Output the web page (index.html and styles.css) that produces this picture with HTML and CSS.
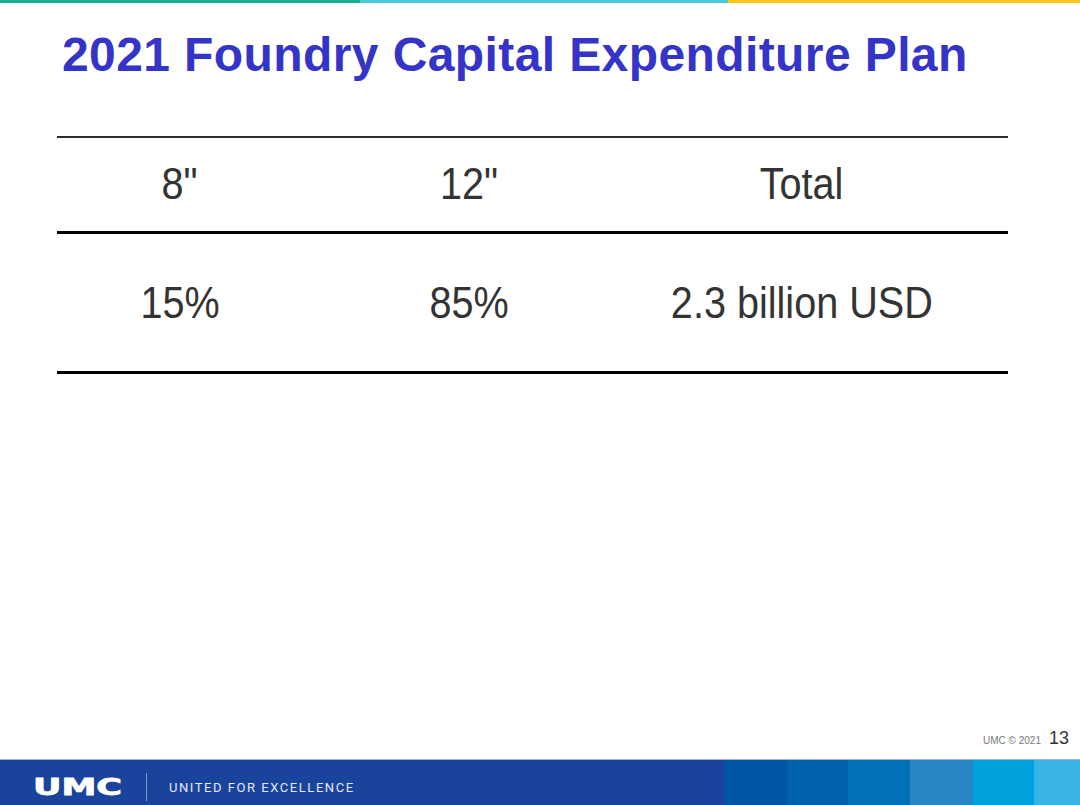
FILE: index.html
```html
<!DOCTYPE html>
<html lang="en">
<head>
<meta charset="utf-8">
<title>2021 Foundry Capital Expenditure Plan</title>
<link rel="stylesheet" href="styles.css">
</head>
<body>
<div class="slide">
  <div class="stripe">
    <span class="seg seg-green"></span>
    <span class="seg seg-cyan"></span>
    <span class="seg seg-yellow"></span>
  </div>

  <h1 class="title">2021 Foundry Capital Expenditure Plan</h1>

  <div class="capex">
    <div class="row row-head">
      <div class="cell"><span class="txt">8"</span></div>
      <div class="cell"><span class="txt">12"</span></div>
      <div class="cell"><span class="txt">Total</span></div>
      <div class="cell"></div>
    </div>
    <div class="row row-body">
      <div class="cell"><span class="txt">15%</span></div>
      <div class="cell"><span class="txt">85%</span></div>
      <div class="cell"><span class="txt">2.3 billion USD</span></div>
      <div class="cell"></div>
    </div>
  </div>

  <div class="spacer"></div>

  <div class="meta">
    <span class="copy">UMC © 2021</span>
    <span class="pageno">13</span>
  </div>

  <div class="footer">
    <div class="brand">
      <svg class="logo" width="92" height="22" viewBox="0 0 92 22" aria-label="UMC">
        <text x="1" y="19" textLength="89" lengthAdjust="spacingAndGlyphs" class="logo-text">UMC</text>
      </svg>
      <span class="divider"></span>
      <span class="tagline">UNITED FOR EXCELLENCE</span>
    </div>
    <span class="blk b1"></span>
    <span class="blk b2"></span>
    <span class="blk b3"></span>
    <span class="blk b4"></span>
    <span class="blk b5"></span>
    <span class="blk b6"></span>
  </div>
</div>
</body>
</html>
```

FILE: styles.css
```css
* { box-sizing: border-box; }

html, body {
  margin: 0;
  padding: 0;
  background: #ffffff;
}

.slide {
  width: 1080px;
  height: 805px;
  display: flex;
  flex-direction: column;
  font-family: "Liberation Sans", Arial, sans-serif;
  overflow: hidden;
}

/* top colour stripe */
.stripe {
  display: flex;
  height: 3px;
}
.seg { display: block; height: 3px; }
.seg-green { width: 360px; background: #17b08e; }
.seg-cyan { width: 368px; background: #4cc9db; }
.seg-yellow { flex: 1; background: #fcc719; }

/* title */
.title {
  margin: 28px 0 0 62px;
  font-size: 48px;
  line-height: 48px;
  font-weight: 700;
  letter-spacing: 0.4px;
  color: #3434c8;
}

/* table */
.capex {
  margin: 57px 0 0 57px;
  width: 951px;
  border-top: 2px solid #2b2b2b;
}
.row {
  display: grid;
  grid-template-columns: 246px 332px 334px 1fr;
  border-bottom: 3px solid #000;
}
.cell {
  text-align: center;
  font-size: 45px;
  line-height: 46px;
  color: #333333;
  white-space: nowrap;
}
.txt {
  display: inline-block;
  transform: scaleX(0.88);
}
.row-head .cell { padding: 23px 0 24px; }
.row-body .cell { padding: 46px 0 45px; }

.spacer { flex: 1; }

/* page meta */
.meta {
  display: flex;
  justify-content: flex-end;
  align-items: baseline;
  gap: 8px;
  padding: 0 11px 10px 0;
}
.copy {
  font-size: 10px;
  color: #777777;
}
.pageno {
  font-size: 18px;
  color: #333333;
}

/* footer */
.footer {
  display: flex;
  height: 46px;
  border-top: 1px solid #9fb6da;
}
.brand {
  flex: 1;
  display: flex;
  align-items: center;
  background: #1a449c;
  padding-left: 32px;
}
.logo { display: block; margin-top: 9px; overflow: visible; }
.logo-text {
  font-family: "DejaVu Sans", sans-serif;
  font-weight: 700;
  font-size: 23px;
  fill: #ffffff;
  stroke: #ffffff;
  stroke-width: 0.8px;
}
.divider {
  width: 1px;
  height: 28px;
  margin: 8px 22px 0 22px;
  background: rgba(255, 255, 255, 0.45);
}
.tagline {
  margin-top: 10px;
  font-family: Roboto, "Liberation Sans", sans-serif;
  font-size: 13px;
  letter-spacing: 1.55px;
  color: #e3e8f3;
}
.blk { display: block; height: 100%; }
.b1 { width: 63px; background: #0155a5; }
.b2 { width: 61px; background: #0263ad; }
.b3 { width: 62px; background: #0271b9; }
.b4 { width: 63px; background: #2a86c7; }
.b5 { width: 61px; background: #00a1dc; }
.b6 { width: 46px; background: #38b5e6; }
```
